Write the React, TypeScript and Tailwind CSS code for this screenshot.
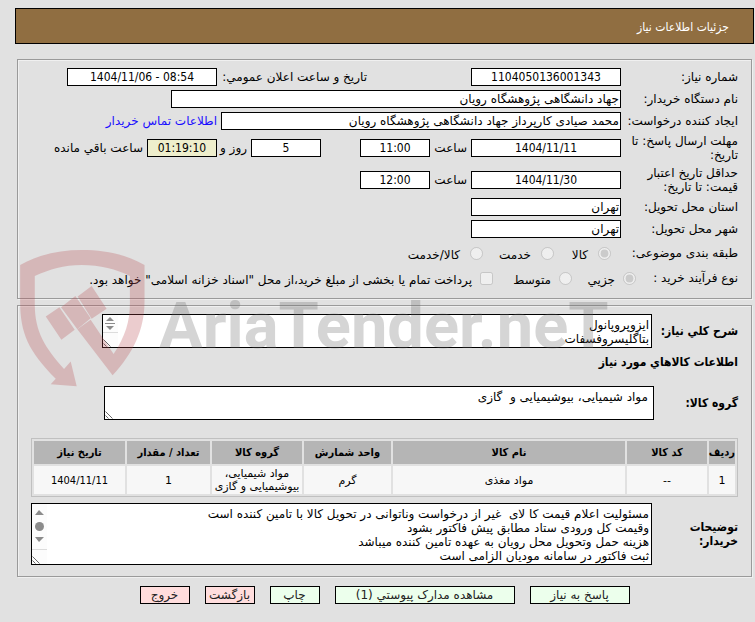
import type { ReactNode } from "react";

const fieldBox =
    "h-[18px] border border-black bg-white px-px text-black outline-none";

// numbers are set in the narrower face, left to right
const numeric = "text-center font-['DejaVu_Sans_Condensed','DejaVu_Sans',sans-serif]";

const condensed = "font-['DejaVu_Sans_Condensed','DejaVu_Sans',sans-serif]";

function Field({
    id,
    value,
    className,
}: {
    id: string;
    value: string;
    className: string;
}) {
    return (
        <input
            id={id}
            type="text"
            dir="auto"
            readOnly
            defaultValue={value}
            className={`${fieldBox} ${className}`}
        />
    );
}

function Row({
    label,
    htmlFor,
    tall,
    children,
}: {
    label: ReactNode;
    htmlFor: string;
    tall?: boolean;
    children: ReactNode;
}) {
    return (
        <div className={tall ? "flex h-8 items-center" : "flex h-[22px] items-center"}>
            <label htmlFor={htmlFor} className="w-[117px] shrink-0 leading-[14px]">
                {label}
            </label>
            {children}
        </div>
    );
}

function Option({
    type,
    name,
    label,
    checked,
    className,
}: {
    type: "radio" | "checkbox";
    name: string;
    label: string;
    checked?: boolean;
    className: string;
}) {
    return (
        <label className={`flex items-center whitespace-nowrap ${className}`}>
            <input
                type={type}
                name={name}
                disabled
                defaultChecked={checked}
                className="size-[13px] shrink-0"
            />
            <span className="pt-1">{label}</span>
        </label>
    );
}

// resize handle in the bottom left corner
function Grip() {
    return (
        <svg viewBox="0 0 8 8" className="absolute bottom-px left-px size-2" fill="none" stroke="#444">
            <path d="M0.5 0.5 7.5 7.5M0.5 4.5 3.5 7.5" strokeWidth="0.8" />
        </svg>
    );
}

function Watermark() {
    return (
        <div dir="ltr" aria-hidden="true" className="pointer-events-none absolute top-[250px] left-5 flex opacity-[0.27]">
            <svg viewBox="60 30 375 412" className="h-[137px] w-[125px]" fill="#b8484e">
                <path d="M60 75C120 42 180 30 245 30C315 30 375 42 434 75V185C434 270 400 340 338 407L232 268L272 240L341 343C376 290 390 245 390 190V108C350 88 300 75 245 75C190 75 150 88 104 108V195C104 275 135 325 192 388L212 365L230 440L152 434L167 417C85 335 60 280 60 185Z" />
                <path d="M137 230 178 202 224 270 184 300ZM183 202 226 168 272 235 232 268ZM233 170 275 138 320 207 275 237Z" />
            </svg>
            <span className="pt-9 pl-[14px] font-['Roboto',sans-serif] text-[65px] leading-[80px] font-bold text-[#676767]">
                AriaTender.neT
            </span>
        </div>
    );
}

const columns = [
    { title: "ردیف", value: "1", width: "w-[26px]" },
    { title: "کد کالا", value: "--", width: "w-[80px]" },
    { title: "نام کالا", value: "مواد مغذی", width: "w-auto" },
    { title: "واحد شمارش", value: "گرم", width: "w-[87px]" },
    { title: "گروه کالا", value: "مواد شیمیایی، بیوشیمیایی و گازی", width: "w-[90px]" },
    { title: "تعداد / مقدار", value: "1", width: "w-[83px]" },
    { title: "تاریخ نیاز", value: "1404/11/11", width: "w-[91px]", numeric: true },
];

const actions = [
    { title: "پاسخ به نیاز", style: "w-[100px] bg-[#ecffec]" },
    { title: "مشاهده مدارک پیوستي (1)", style: "w-[180px] bg-[#ecffec]" },
    { title: "چاپ", style: "w-[50px] bg-[#ecffec]" },
    { title: "بازگشت", style: "w-[50px] bg-[#ffdddd]" },
    { title: "خروج", style: "w-[50px] bg-[#ffdddd]" },
];

const panel =
    "mr-[3px] ml-[17px] border border-[#9a9a9a] px-[13px] shadow-[inset_1px_1px_0_#f0f0f0,1px_1px_0_#f0f0f0]";

const buyerNotes = `مسئولیت اعلام قیمت کا لای  غیر از درخواست وناتوانی در تحویل کالا با تامین کننده است
وقیمت کل ورودی ستاد مطابق پیش فاکتور بشود
هزینه حمل وتحویل محل رویان به عهده تامین کننده میباشد
ثبت فاکتور در سامانه مودیان الزامی است`;

export default function App() {
    return (
        <main
            dir="rtl"
            className="relative min-h-screen bg-[#e1e1e1] pt-2 pb-4 font-['DejaVu_Sans',sans-serif] text-[12px] leading-[14px] text-black"
        >
            <h1 className={`mr-px ml-[15px] flex h-9 items-center border border-black bg-[#906e41] pt-px pr-6 text-white ${condensed}`}>
                جزئیات اطلاعات نیاز
            </h1>

            <section className={`mt-[15px] pt-[6px] pb-2 ${panel}`}>
                <Row label="شماره نیاز:" htmlFor="need-no">
                    <Field id="need-no" value="1104050136001343" className={`w-[150px] ${numeric}`} />
                    <label htmlFor="announce" className="mr-[104px] w-[150px] whitespace-nowrap">
                        تاریخ و ساعت اعلان عمومي:
                    </label>
                    <Field id="announce" value="1404/11/06 - 08:54" className={`w-[150px] ${numeric}`} />
                </Row>
                <Row label="نام دستگاه خریدار:" htmlFor="buyer">
                    <Field id="buyer" value="جهاد دانشگاهی پژوهشگاه رویان" className="w-[450px]" />
                </Row>
                <Row label="ایجاد کننده درخواست:" htmlFor="creator">
                    <Field
                        id="creator"
                        value="محمد صیادی کارپرداز جهاد دانشگاهی پژوهشگاه رویان"
                        className="w-[400px]"
                    />
                    <a href="#contact" className="mr-1 whitespace-nowrap text-[#1a0dff]">
                        اطلاعات تماس خریدار
                    </a>
                </Row>
                <Row label={<>مهلت ارسال پاسخ: تا<br />تاریخ:</>} htmlFor="deadline" tall>
                    <Field id="deadline" value="1404/11/11" className={`w-[150px] ${numeric}`} />
                    <label htmlFor="deadline-time" className="w-[41px] pr-1">ساعت</label>
                    <Field id="deadline-time" value="11:00" className={`w-[70px] ${numeric}`} />
                    <Field id="days-left" value="5" className={`mr-[39px] w-[70px] ${numeric}`} />
                    <label htmlFor="days-left" className="w-[34px] pr-1 whitespace-nowrap">روز و</label>
                    <input
                        id="time-left"
                        type="text"
                        readOnly
                        defaultValue="01:19:10"
                        className={`h-[18px] w-[70px] border border-black bg-[#eeeecc] outline-none ${numeric}`}
                    />
                    <label htmlFor="time-left" className="pr-1 whitespace-nowrap">ساعت باقي مانده</label>
                </Row>
                <Row label={<>حداقل تاریخ اعتبار<br />قیمت: تا تاریخ:</>} htmlFor="valid-until" tall>
                    <Field id="valid-until" value="1404/11/30" className={`w-[150px] ${numeric}`} />
                    <label htmlFor="valid-time" className="w-[41px] pr-1">ساعت</label>
                    <Field id="valid-time" value="12:00" className={`w-[70px] ${numeric}`} />
                </Row>
                <Row label="استان محل تحویل:" htmlFor="province">
                    <Field id="province" value="تهران" className="w-[150px]" />
                </Row>
                <Row label="شهر محل تحویل:" htmlFor="city">
                    <Field id="city" value="تهران" className="w-[150px]" />
                </Row>
                <div role="radiogroup" aria-label="طبقه بندی موضوعی" className="flex h-[26px] items-center">
                    <span className="w-[127px]">طبقه بندی موضوعی:</span>
                    <Option type="radio" name="subject" label="کالا" checked className="w-[57px] gap-[10px]" />
                    <Option type="radio" name="subject" label="خدمت" className="w-[71px] gap-[10px]" />
                    <Option type="radio" name="subject" label="کالا/خدمت" className="gap-[10px]" />
                </div>
                <div role="radiogroup" aria-label="نوع فرآیند خرید" className="flex h-6 items-center">
                    <span className="w-[102px]">نوع فرآیند خرید :</span>
                    <Option type="radio" name="process" label="جزیي" checked className="w-[64px] gap-2" />
                    <Option type="radio" name="process" label="متوسط" className="w-[79px] gap-2" />
                    <Option
                        type="checkbox"
                        name="treasury"
                        label={'پرداخت تمام یا بخشی از مبلغ خرید،از محل "اسناد خزانه اسلامی" خواهد بود.'}
                        className="gap-2"
                    />
                </div>
            </section>

            <section className={`mt-[6px] pt-2 pb-[11px] ${panel}`}>
                <div className="flex items-center">
                    <label htmlFor="summary" className={`w-[86px] shrink-0 font-bold ${condensed}`}>شرح کلي نیاز:</label>
                    <div className="relative w-[550px]">
                        <textarea
                            id="summary"
                            readOnly
                            defaultValue={"ایزوپروپانول\nبتاگلیسروفسفات"}
                            className="block h-[34px] w-full resize-none overflow-hidden border border-black bg-white px-[2px] pt-[3px] leading-[14px] outline-none"
                        />
                        <svg viewBox="0 0 15 32" className="absolute top-px left-px h-8 w-[15px]" fill="#8b8b8b">
                            <path fill="#fcfcfc" d="M0 0H15V32H0Z" />
                            <path d="M3 6 7 2 11 6ZM3 11 7 15 11 11ZM2 8H12V9H2Z" />
                            <path fill="#dcdcdc" d="M0 17H15V18H0Z" />
                        </svg>
                        <Grip />
                    </div>
                </div>
                <h2 className={`pt-[7px] font-bold ${condensed}`}>اطلاعات کالاهاي مورد نیاز</h2>
                <div className="mt-[17px] flex items-center">
                    <label htmlFor="group" className={`w-[84px] shrink-0 font-bold ${condensed}`}>گروه کالا:</label>
                    <div className="relative w-[550px]">
                        <textarea
                            id="group"
                            readOnly
                            defaultValue={"مواد شیمیایی، بیوشیمیایی و  گازی"}
                            className="block h-[34px] w-full resize-none overflow-hidden border border-black bg-white px-[5px] pt-[3px] leading-[14px] outline-none"
                        />
                        <Grip />
                    </div>
                </div>

                <table className="mt-[18px] w-full table-fixed border-separate border-spacing-[2px] border border-[#c0c0c0] text-center text-[11px]">
                    <thead>
                        <tr>
                            {columns.map((col) => (
                                <th
                                    key={col.title}
                                    className={`h-[23px] bg-[#b5b5b5] p-0 font-bold whitespace-nowrap ${condensed} ${col.width}`}
                                >
                                    {col.title}
                                </th>
                            ))}
                        </tr>
                    </thead>
                    <tbody>
                        <tr>
                            {columns.map((col) => (
                                <td
                                    key={col.title}
                                    className={`h-7 bg-[#f7f7f7] p-0 leading-[13px] ${col.numeric ? condensed : ""}`}
                                >
                                    {col.value}
                                </td>
                            ))}
                        </tr>
                    </tbody>
                </table>

                <div className="mt-[6px] flex items-center">
                    <label htmlFor="notes" className={`w-[86px] shrink-0 font-bold ${condensed}`}>
                        توضیحات
                        <br />
                        خریدار:
                    </label>
                    <div className="relative flex-1">
                        <textarea
                            id="notes"
                            readOnly
                            defaultValue={buyerNotes}
                            className="block h-[62px] w-full resize-none overflow-hidden border border-black bg-white px-[2px] pt-[3px] leading-[14px] outline-none"
                        />
                        <svg viewBox="0 0 15 60" className="absolute top-px left-px h-[60px] w-[15px]" fill="#8b8b8b">
                            <path fill="#fcfcfc" d="M0 0H15V60H0Z" />
                            <path d="M3 11 7 6 12 11ZM3 33 7 38 12 33Z" />
                            <circle cx="7.5" cy="22.5" r="4.5" />
                            <path fill="#dcdcdc" d="M0 45H15V46H0Z" />
                        </svg>
                        <Grip />
                    </div>
                </div>
            </section>

            <div className="mt-[9px] mr-[3px] ml-[17px] flex justify-center gap-[15px]">
                {actions.map((action) => (
                    <button
                        key={action.title}
                        type="button"
                        className={`h-[18px] border border-black whitespace-nowrap text-[#222] ${action.style}`}
                    >
                        {action.title}
                    </button>
                ))}
            </div>

            <Watermark />
        </main>
    );
}
